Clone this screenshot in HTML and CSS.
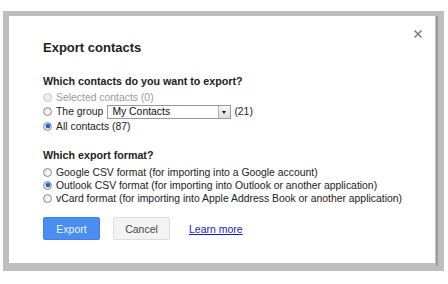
FILE: index.html
```html
<!DOCTYPE html>
<html>
<head>
<meta charset="utf-8">
<link rel="stylesheet" href="styles.css">
</head>
<body>
<div class="frame">
  <div class="dialog">
    <svg class="close" width="8" height="8" viewBox="0 0 8 8"><path d="M0.5 0.5L7.5 7.5M7.5 0.5L0.5 7.5" stroke="#7a7a7a" stroke-width="1.5"/></svg>
    <div class="title">Export contacts</div>
    <div class="q q1">Which contacts do you want to export?</div>
    <div class="opt disabled"><span class="radio"></span>Selected contacts (0)</div>
    <div class="opt grp"><span class="radio"></span>The group <span class="select"><span class="sel-text">My Contacts</span><span class="arrow"></span></span> (21)</div>
    <div class="opt"><span class="radio checked"></span>All contacts (87)</div>
    <div class="q q2">Which export format?</div>
    <div class="opt fmt"><span class="radio"></span>Google CSV format (for importing into a Google account)</div>
    <div class="opt fmt"><span class="radio checked"></span>Outlook CSV format (for importing into Outlook or another application)</div>
    <div class="opt fmt"><span class="radio"></span>vCard format (for importing into Apple Address Book or another application)</div>
    <div class="actions">
      <span class="btn primary">Export</span>
      <span class="btn secondary">Cancel</span>
      <a class="link" href="#">Learn more</a>
    </div>
  </div>
</div>
</body>
</html>
```

FILE: styles.css
```css
html, body {
  margin: 0;
  padding: 0;
  background: #ffffff;
}
body {
  font-family: "Liberation Sans", Arial, sans-serif;
  color: #222;
}
.frame {
  margin: 11px 0 0 3px;
  width: 441px;
  height: 260px;
  box-sizing: border-box;
  padding: 5px 9px 8px 6px;
  background: #bebebe;
}
.dialog {
  position: relative;
  background: #fff;
  height: 247px;
  box-sizing: border-box;
  padding: 24px 0 0 34px;
}
.dialog::after {
  content: "";
  position: absolute;
  right: -3px;
  top: 0;
  width: 2px;
  height: 250px;
  background: #9c9c9c;
}
.close {
  position: absolute;
  right: 13px;
  top: 14px;
}
.title {
  font-weight: bold;
  font-size: 13px;
  line-height: 15px;
  color: #222;
}
.q {
  font-weight: bold;
  font-size: 10.7px;
  line-height: 13px;
  color: #222;
}
.q1 { margin-top: 19.5px; }
.q2 { margin-top: 15.5px; }
.opt {
  display: flex;
  align-items: center;
  font-size: 10.4px;
  height: 14px;
  color: #222;
  white-space: nowrap;
}
.q1 + .opt { margin-top: 2.5px; }
.opt.grp { height: 15px; }
.opt.fmt { height: 13px; }
.q2 + .opt { margin-top: 4px; }
.opt.disabled { color: #9a9a9a; }
.radio {
  width: 9px;
  height: 9px;
  box-sizing: border-box;
  border-radius: 50%;
  border: 1px solid #8c8c8c;
  background: radial-gradient(circle at 60% 65%, #fbfbfb 0, #e4e4e4 70%, #d2d2d2 100%);
  margin: 0 4px 0 0;
  flex: none;
  position: relative;
}
.disabled .radio {
  border-color: #c6c6c6;
  background: #eeeeee;
}
.radio.checked::after {
  content: "";
  position: absolute;
  left: 1.5px;
  top: 1.5px;
  width: 4px;
  height: 4px;
  border-radius: 50%;
  background: #1f5fc8;
  box-shadow: 0 0 0 0.5px #5a8be0;
}
.select {
  display: inline-flex;
  align-items: stretch;
  width: 124px;
  height: 14px;
  box-sizing: border-box;
  border: 1px solid #9a9a9a;
  background: #fff;
  margin: 0 3px 0 4px;
}
.sel-text {
  flex: 1;
  padding-left: 4px;
  line-height: 12px;
  color: #111;
}
.arrow {
  width: 11px;
  border-left: 1px solid #b0b0b0;
  background: linear-gradient(#f6f6f6, #dedede) ;
  position: relative;
}
.arrow::after {
  content: "";
  position: absolute;
  left: 3px;
  top: 5px;
  border-left: 2.5px solid transparent;
  border-right: 2.5px solid transparent;
  border-top: 3px solid #111;
}
.actions {
  display: flex;
  align-items: center;
  margin-top: 12.5px;
}
.btn {
  display: inline-flex;
  align-items: center;
  justify-content: center;
  height: 23px;
  width: 57px;
  box-sizing: border-box;
  border-radius: 2px;
  font-size: 10.5px;
}
.primary {
  background: #4a8ff0;
  border: 1px solid #3f82e6;
  color: #eaf2ff;
}
.secondary {
  margin-left: 13px;
  background: #f3f3f3;
  border: 1px solid #dedede;
  color: #444;
}
.link {
  margin-left: 19px;
  font-size: 10.5px;
  color: #1a1acc;
  text-decoration: underline;
}
```
